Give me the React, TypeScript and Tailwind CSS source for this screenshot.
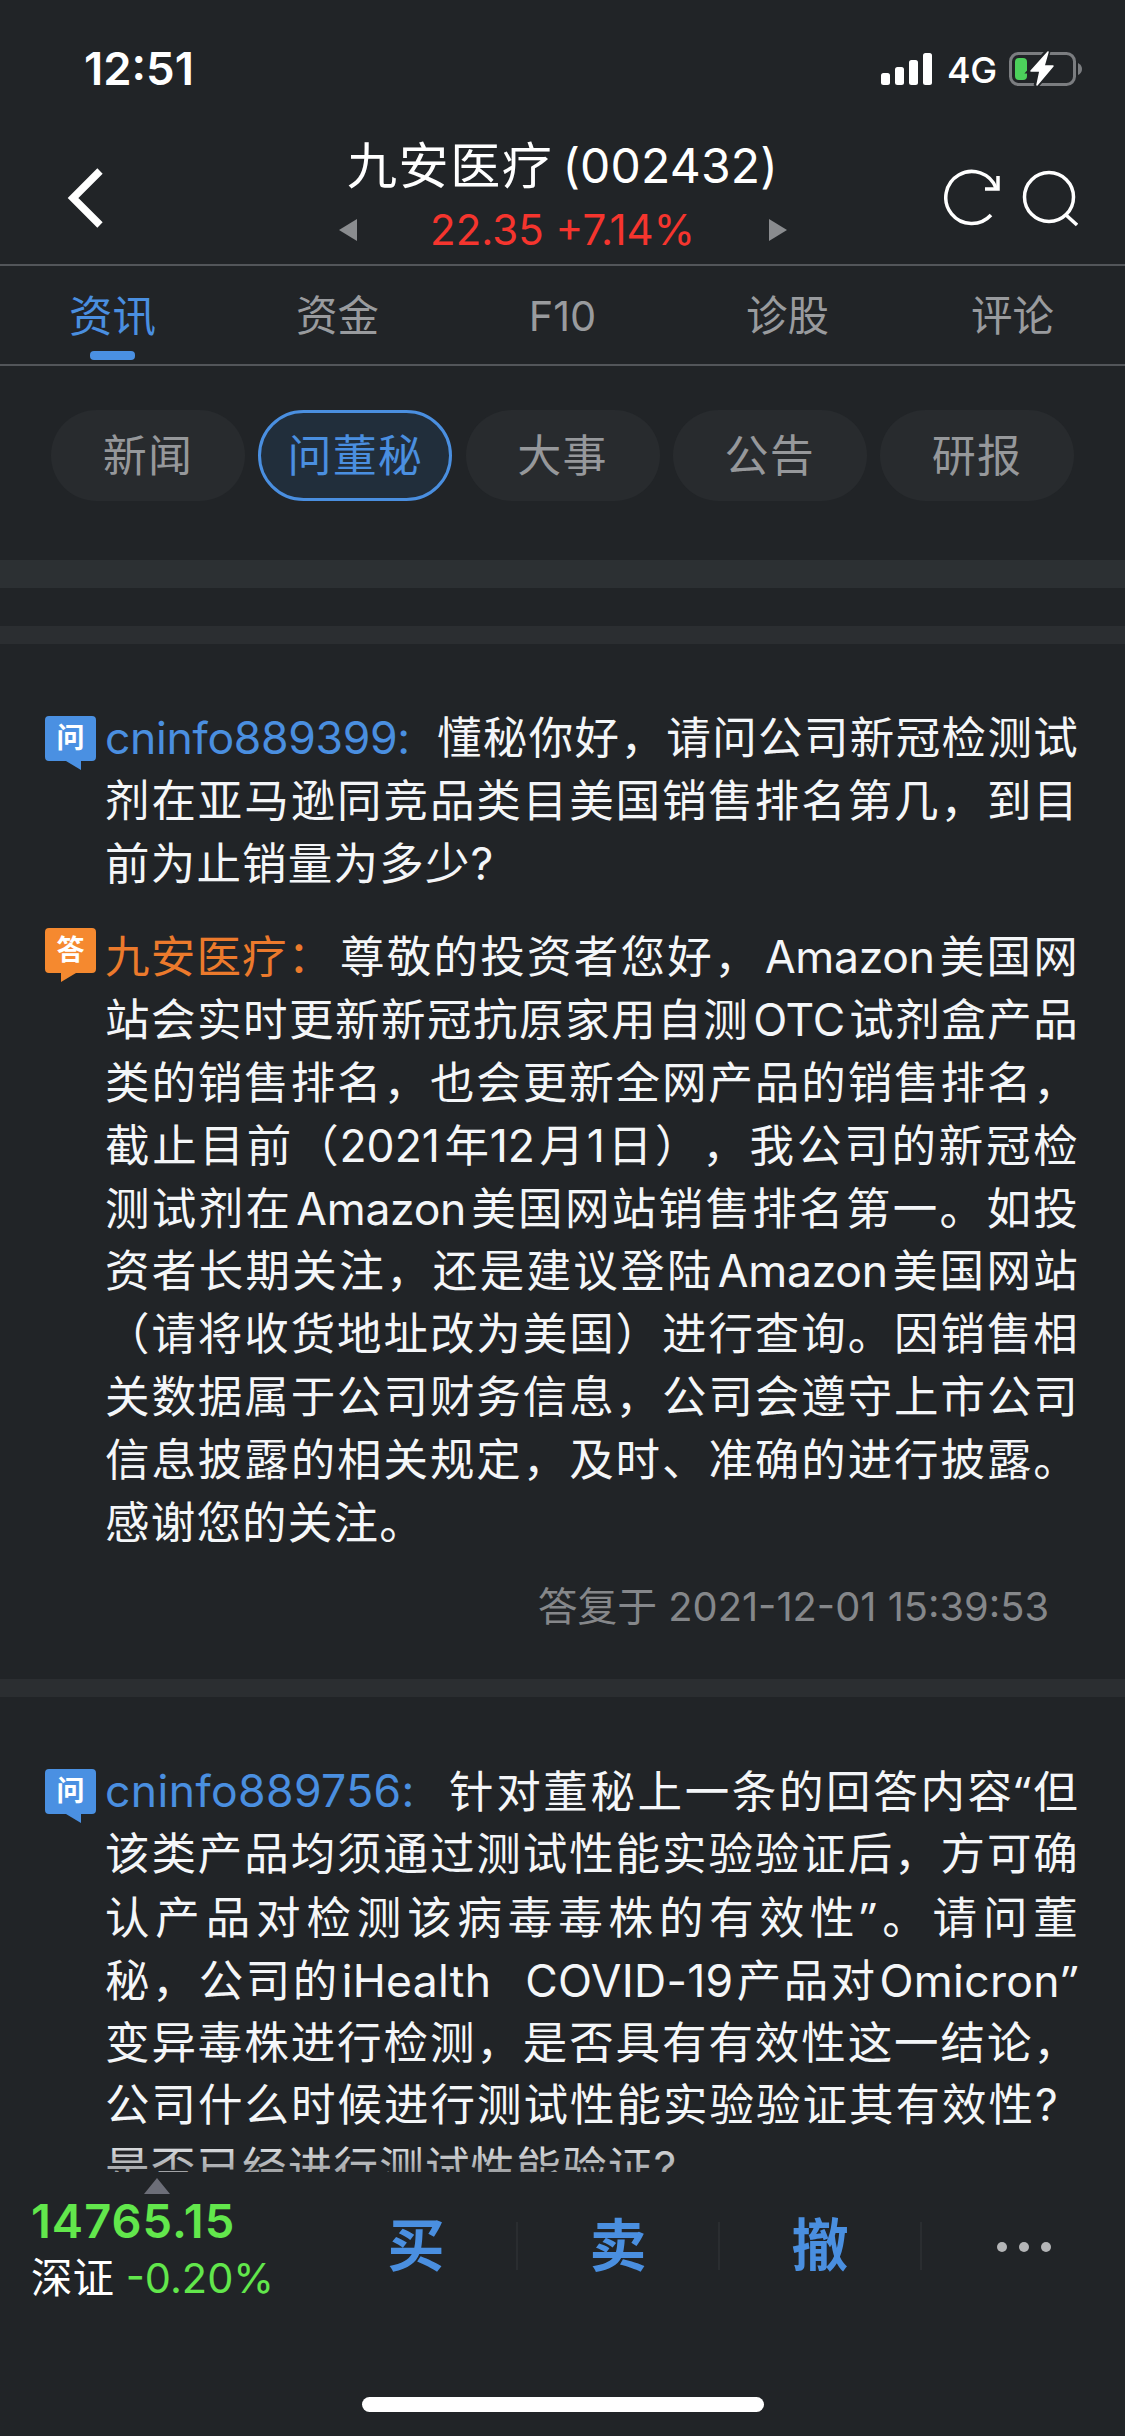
import React from 'react';

const FONT = "font-['Inter','Noto_Sans_CJK_SC',sans-serif]";

const tabs = ['资讯', '资金', 'F10', '诊股', '评论'];
const filters = ['新闻', '问董秘', '大事', '公告', '研报'];

type Line = { text: string; full?: boolean; short?: boolean };

const question1: Line[] = [
  { text: '懂秘你好，请问公司新冠检测试', full: true },
  { text: '剂在亚马逊同竞品类目美国销售排名第几，到目', full: true },
  { text: '前为止销量为多少?' },
];

const answer1: Line[] = [
  { text: '尊敬的投资者您好，Amazon美国网', full: true },
  { text: '站会实时更新新冠抗原家用自测OTC试剂盒产品', full: true },
  { text: '类的销售排名，也会更新全网产品的销售排名，', full: true },
  { text: '截止目前（2021年12月1日），我公司的新冠检', full: true },
  { text: '测试剂在Amazon美国网站销售排名第一。如投', full: true },
  { text: '资者长期关注，还是建议登陆Amazon美国网站', full: true },
  { text: '（请将收货地址改为美国）进行查询。因销售相', full: true },
  { text: '关数据属于公司财务信息，公司会遵守上市公司', full: true },
  { text: '信息披露的相关规定，及时、准确的进行披露。', full: true },
  { text: '感谢您的关注。' },
];

const question2: Line[] = [
  { text: '针对董秘上一条的回答内容“但', full: true },
  { text: '该类产品均须通过测试性能实验验证后，方可确', full: true },
  { text: '认产品对检测该病毒毒株的有效性”。请问董', full: true },
  { text: '秘，公司的iHealth\u00a0 COVID-19产品对Omicron”', full: true },
  { text: '变异毒株进行检测，是否具有有效性这一结论，', full: true },
  { text: '公司什么时候进行测试性能实验验证其有效性?', full: true, short: true },
  { text: '是否已经进行测试性能验证?' },
];

function runClass(part: string) {
  if (/[“”]/.test(part)) return "font-['Noto_Sans']";
  if (/^\d/.test(part)) return 'tracking-[0px] -ml-[2px] mr-[3px]';
  if (part.length > 6) return 'tracking-[0.3px] mx-[2px]';
  return 'tracking-[-0.3px] mx-[4px]';
}

// latin words sit tighter than the chinese text and keep a small gap around them
function renderText(text: string) {
  return text.split(/([A-Za-z0-9-]{2,}|[“”])/).map((part, i) =>
    i % 2 === 1 ? (
      <span key={i} className={runClass(part)}>{part}</span>
    ) : (
      part
    )
  );
}

function Badge({ kind }: { kind: 'ask' | 'reply' }) {
  const ask = kind === 'ask';
  return (
    <div className="relative w-[51px] h-[54px] shrink-0">
      <svg viewBox="0 0 51 54" className="absolute left-0 top-0 w-[51px] h-[54px]">
        <path
          d={
            ask
              ? 'M4 0H47Q51 0 51 4V41Q51 45 47 45H36V54L21 45H4Q0 45 0 41V4Q0 0 4 0Z'
              : 'M4 0H47Q51 0 51 4V41Q51 45 47 45H31L16 54V45H4Q0 45 0 41V4Q0 0 4 0Z'
          }
          fill={ask ? '#4a90e2' : '#f5892f'}
        />
      </svg>
      <span className="relative block text-center text-[28px] leading-[45px] font-bold text-white">
        {ask ? '问' : '答'}
      </span>
    </div>
  );
}

interface MessageProps {
  kind: 'ask' | 'reply';
  name: string;
  nameClass: string;
  lines: Line[];
}

function Message({ kind, name, nameClass, lines }: MessageProps) {
  const ask = kind === 'ask';
  return (
    <div className="flex pl-[45px] pr-[46px]">
      <Badge kind={kind} />
      <div
        className={`ml-[9px] flex-1 min-w-0 text-[44.5px] leading-[62.8px] tracking-[1.2px] text-[#f4f6f8] whitespace-nowrap ${ask ? '-mt-[9px]' : '-mt-[2px]'}`}
      >
        {lines.map((line, i) => (
          <div key={i} className={`flex h-[62.8px] ${line.short ? 'pr-[20px]' : ''}`}>
            {i === 0 && (
              <span className={`shrink-0 ${nameClass} ${ask ? 'text-[#4a8fe0]' : 'text-[#ec7a2c]'}`}>{name}</span>
            )}
            <span className={line.full ? 'flex-1 min-w-0 [text-align-last:justify]' : ''}>{renderText(line.text)}</span>
          </div>
        ))}
      </div>
    </div>
  );
}

function StatusBar() {
  return (
    <div className="h-[132px] flex items-start justify-between pl-[84px] pr-[42px]">
      <div className="pt-[43px] text-[45.5px] leading-[52px] font-semibold text-white">12:51</div>
      <div className="flex items-start pt-[50px]">
        <svg viewBox="0 0 52 34" className="w-[52px] h-[34px] mt-[2px]" fill="#fff">
          <rect x="0" y="21" width="9" height="12" rx="2.5" />
          <rect x="14" y="15" width="9" height="18" rx="2.5" />
          <rect x="28" y="8" width="9" height="25" rx="2.5" />
          <rect x="42" y="1" width="9" height="32" rx="2.5" />
        </svg>
        <span className="ml-[14px] mr-[14px] w-[48px] text-[36px] leading-[40px] font-medium tracking-[-0.5px] text-white">4G</span>
        <svg viewBox="0 0 74 38" className="w-[74px] h-[38px]">
          <rect x="1.5" y="3.5" width="64" height="31" rx="8" fill="none" stroke="#7b7d80" strokeWidth="3" />
          <path d="M69 13Q73 15 73 19Q73 23 69 25Z" fill="#7b7d80" />
          <rect x="6" y="8" width="12" height="22" rx="4" fill="#4cd15b" />
          <path d="M39 1L21 21H31L27 36L45 16H35Z" fill="#fff" stroke="#212427" strokeWidth="5" />
          <path d="M39 2L22 21H31L28 35L44 16H35Z" fill="#fff" stroke="#fff" strokeWidth="1.5" strokeLinejoin="round" />
        </svg>
      </div>
    </div>
  );
}

function Header() {
  return (
    <div className="h-[132px] flex">
      <div className="w-[330px] pl-[66px] pt-[35px]">
        <svg viewBox="0 0 40 62" className="w-[40px] h-[62px]">
          <path d="M34 4L7 31L34 58" fill="none" stroke="#fff" strokeWidth="7.5" />
        </svg>
      </div>
      <div className="flex-1 flex flex-col items-center">
        <div className="flex text-[50px] leading-[68px] tracking-[1.6px] text-white whitespace-nowrap">
          九安医疗
          <span className="ml-[9px] text-[48px] tracking-[0.2px]">(002432)</span>
        </div>
        <div className="flex items-center justify-between w-[448px] h-[60px]">
          <svg viewBox="0 0 18 22" className="w-[18px] h-[22px]"><path d="M18 0V22L0 11Z" fill="#8a8c8f" /></svg>
          <span className="text-[42px] leading-[50px] text-[#f5352e]">22.35 +7.14%</span>
          <svg viewBox="0 0 18 22" className="w-[18px] h-[22px]"><path d="M0 0V22L18 11Z" fill="#8a8c8f" /></svg>
        </div>
      </div>
      <div className="w-[330px] flex pl-[149px] pt-[37px] gap-[22px]">
        <svg viewBox="0 0 56 58" className="w-[56px] h-[58px]" fill="none" stroke="#fff" strokeWidth="3.5">
          <path d="M47 46A26 26 0 1 1 52 19" />
          <path d="M54 7V20H41" />
        </svg>
        <svg viewBox="0 0 56 58" className="w-[56px] h-[58px]" fill="none" stroke="#fff" strokeWidth="3.5">
          <circle cx="27" cy="28" r="24.5" />
          <path d="M44 46L55 56" />
        </svg>
      </div>
    </div>
  );
}

function BottomBar() {
  return (
    <div className="relative h-[264px] bg-[#212427]">
      <svg viewBox="0 0 26 16" className="absolute left-[144px] top-[6px] w-[26px] h-[16px]">
        <path d="M13 0L26 16H0Z" fill="#6c6e78" />
      </svg>
      <div className="flex h-[148px]">
        <div className="w-[316px] pl-[31px] pt-[22px] whitespace-nowrap">
          <div className="text-[47px] leading-[54px] tracking-[1px] font-semibold text-[#62e74c]">14765.15</div>
          <div className="text-[41.5px] leading-[60px] text-white">
            深证 <span className="text-[#62e74c]">-0.20%</span>
          </div>
        </div>
        {['买', '卖', '撤'].map((label) => (
          <div key={label} className="w-[202px] flex items-center justify-center">
            <span className="w-[200px] text-center text-[57px] font-bold text-[#4a8fe0]">{label}</span>
            <i className="w-[2px] h-[48px] bg-[#2a2d30]" />
          </div>
        ))}
        <div className="flex-1 flex items-center justify-center gap-[12px] pt-[2px]">
          {[0, 1, 2].map((i) => (
            <i key={i} className="size-[10px] rounded-full bg-[#b4b5b7]" />
          ))}
        </div>
      </div>
      <div className="mx-auto mt-[77px] w-[402px] h-[15px] rounded-full bg-white" />
    </div>
  );
}

export default function App() {
  return (
    <div className={`w-[1125px] h-[2436px] bg-[#212427] overflow-hidden flex flex-col [text-spacing-trim:space-all] ${FONT}`}>
      <StatusBar />
      <Header />
      <div className="h-[102px] shrink-0 border-y-2 border-[#53565a] flex">
        {tabs.map((tab, i) => (
          <div
            key={tab}
            className={`w-[225px] flex flex-col items-center pt-[19px] ${i === 0 ? 'text-[43.5px] text-[#4a8fe0]' : 'text-[41.5px] text-[#999b9e]'}`}
          >
            <span className="leading-[62px]">{tab}</span>
            {i === 0 && <i className="mt-[4px] w-[45px] h-[9px] rounded-[4px] bg-[#4a90e2]" />}
          </div>
        ))}
      </div>
      <div className="shrink-0 h-[194px] pt-[44px] pl-[51px] pr-[51px] flex justify-between">
        {filters.map((filter, i) => (
          <div
            key={filter}
            className={`w-[194px] h-[91px] rounded-full flex items-center justify-center text-[44px] tracking-[1.2px] ${i === 1 ? 'border-[3px] border-[#4a8fe0] bg-[#212e3b] text-[#4a8fe0]' : 'bg-[#282b2e] text-[#96989b]'}`}
          >
            {filter}
          </div>
        ))}
      </div>
      <div className="shrink-0 h-[28px] bg-[#2c3033]" />
      <div className="shrink-0 mt-[38px] h-[18px] bg-[#2b2e31]" />
      <div className="relative flex-1 min-h-0 overflow-hidden">
        <div className="pt-[72px]">
          <Message kind="ask" name="cninfo889399:" nameClass="w-[332px] tracking-[-0.3px]" lines={question1} />
        </div>
        <div className="pt-[33px]">
          <Message kind="reply" name="九安医疗：" nameClass="w-[235px]" lines={answer1} />
        </div>
        <div className="pr-[76px] pt-[23px] text-right text-[39.8px] leading-[60px] text-[#85878a]">答复于 2021-12-01 15:39:53</div>
        <div className="mt-[42px] h-[18px] bg-[#2b2e31]" />
        <div className="pt-[72px]">
          <Message kind="ask" name="cninfo889756:" nameClass="w-[344px] tracking-[0.4px]" lines={question2} />
        </div>
        <div className="absolute inset-x-0 bottom-0 h-[36px] bg-linear-to-b from-[#212427]/0 to-[#212427]/40" />
      </div>
      <div className="shrink-0">
        <BottomBar />
      </div>
    </div>
  );
}
